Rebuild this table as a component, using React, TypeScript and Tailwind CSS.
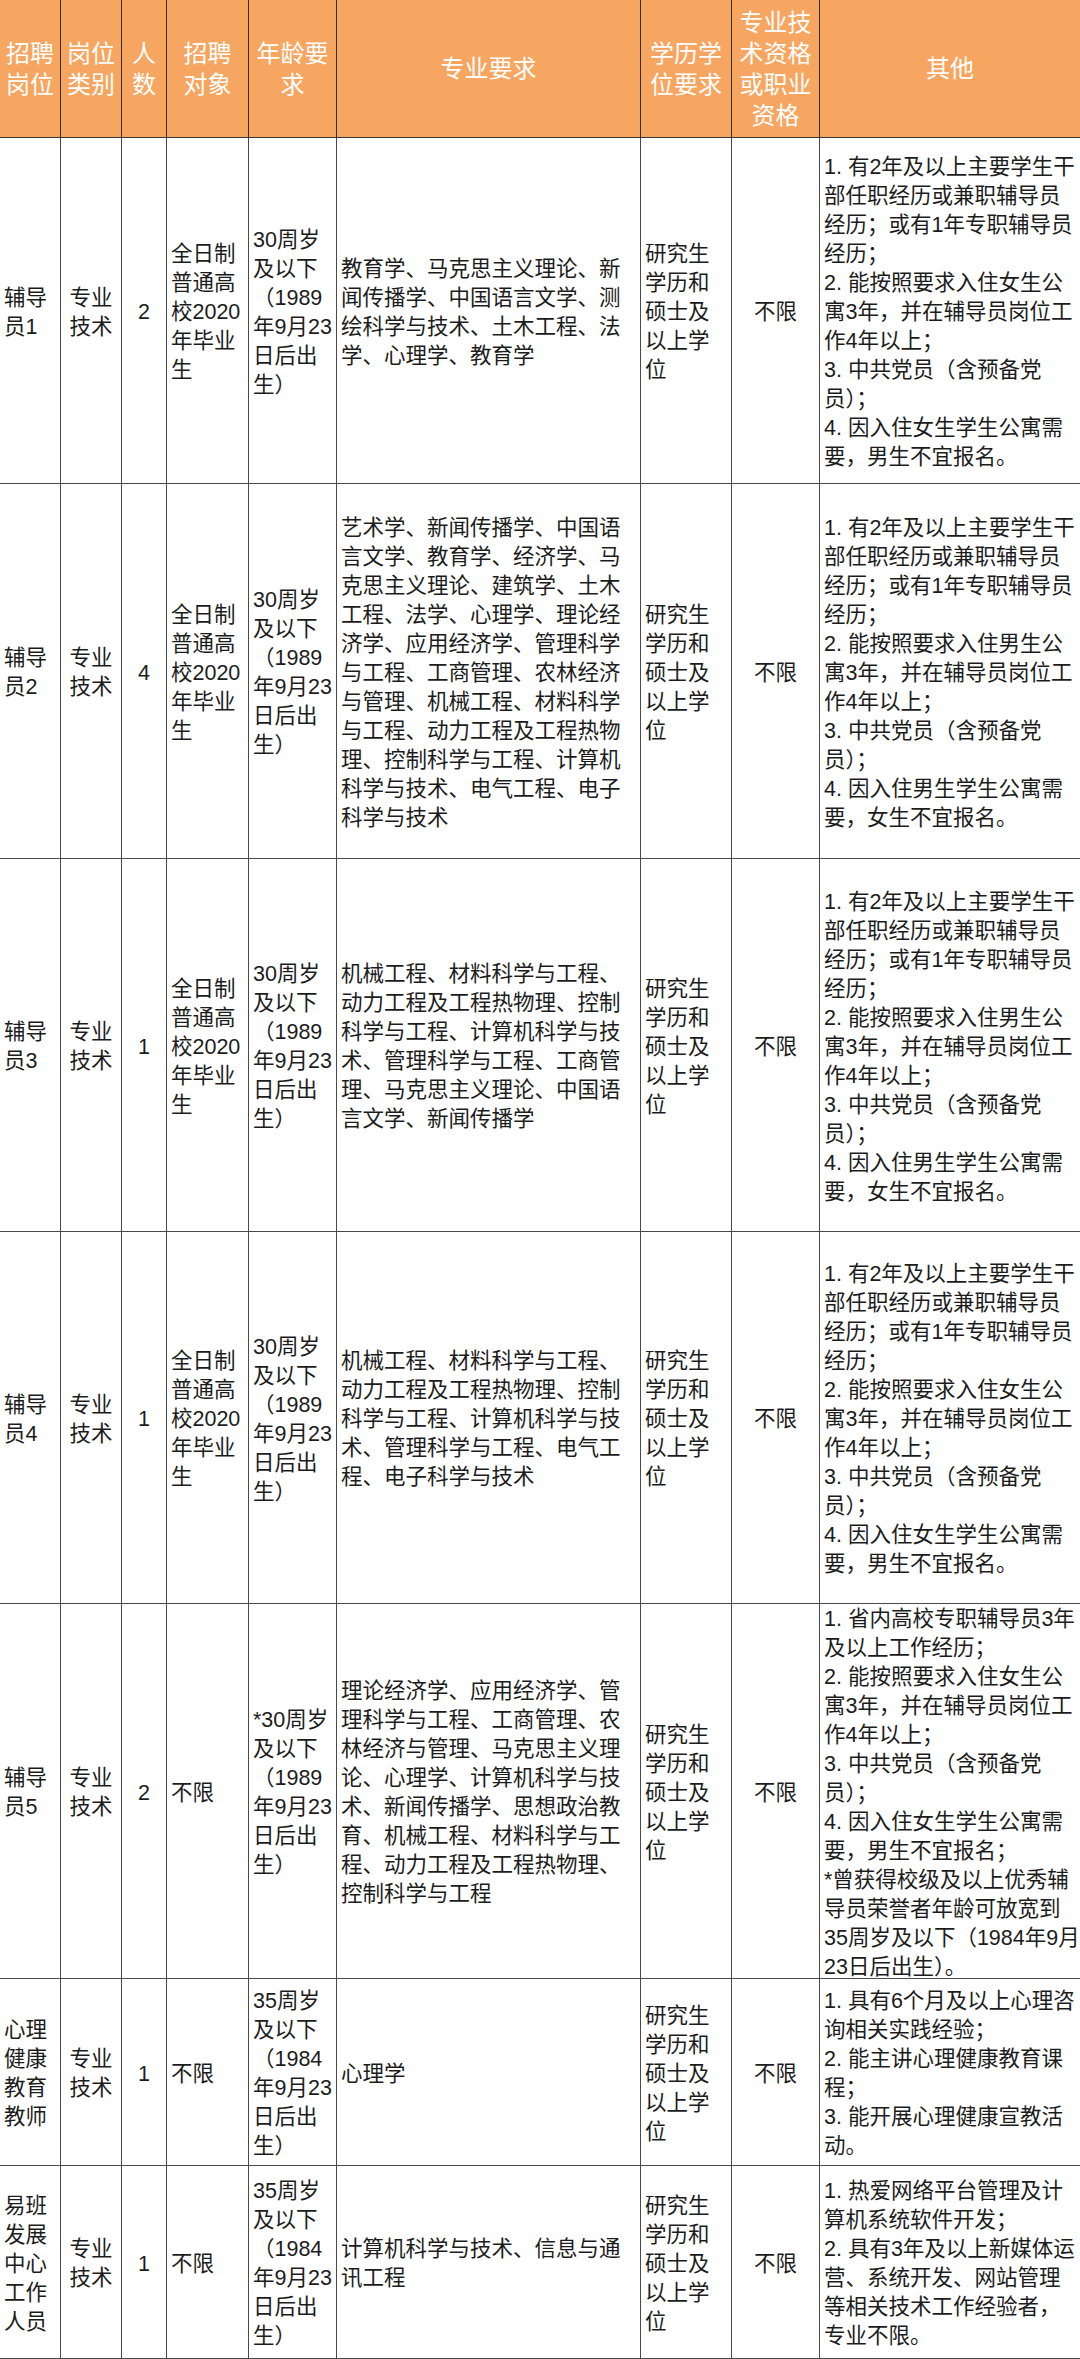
import React from 'react';

// recruitment table: fixed column widths and row heights, text lines broken as in the sheet
type Align = 'left' | 'center';

interface Row {
  h: string;
  cells: string[][];
}

const ALIGN: Align[] = ['left', 'center', 'center', 'left', 'left', 'left', 'left', 'center', 'left'];

const HEADER: string[][] = [
  ['招聘', '岗位'],
  ['岗位', '类别'],
  ['人', '数'],
  ['招聘', '对象'],
  ['年龄要', '求'],
  ['专业要求'],
  ['学历学', '位要求'],
  ['专业技', '术资格', '或职业', '资格'],
  ['其他'],
];

const EDU = ['研究生', '学历和', '硕士及', '以上学', '位'];
const TYPE = ['专业', '技术'];
const AGE30 = ['30周岁', '及以下', '（1989', '年9月23', '日后出', '生）'];
const AGE35 = ['35周岁', '及以下', '（1984', '年9月23', '日后出', '生）'];
const FULLTIME = ['全日制', '普通高', '校2020', '年毕业', '生'];

const otherFemale = [
  '1. 有2年及以上主要学生干',
  '部任职经历或兼职辅导员',
  '经历；或有1年专职辅导员',
  '经历；',
  '2. 能按照要求入住女生公',
  '寓3年，并在辅导员岗位工',
  '作4年以上；',
  '3. 中共党员（含预备党',
  '员）；',
  '4. 因入住女生学生公寓需',
  '要，男生不宜报名。',
];

const otherMale = [
  '1. 有2年及以上主要学生干',
  '部任职经历或兼职辅导员',
  '经历；或有1年专职辅导员',
  '经历；',
  '2. 能按照要求入住男生公',
  '寓3年，并在辅导员岗位工',
  '作4年以上；',
  '3. 中共党员（含预备党',
  '员）；',
  '4. 因入住男生学生公寓需',
  '要，女生不宜报名。',
];

const ROWS: Row[] = [
  {
    h: 'h-[346px]',
    cells: [
      ['辅导', '员1'],
      TYPE,
      ['2'],
      FULLTIME,
      AGE30,
      ['教育学、马克思主义理论、新', '闻传播学、中国语言文学、测', '绘科学与技术、土木工程、法', '学、心理学、教育学'],
      EDU,
      ['不限'],
      otherFemale,
    ],
  },
  {
    h: 'h-[375px]',
    cells: [
      ['辅导', '员2'],
      TYPE,
      ['4'],
      FULLTIME,
      AGE30,
      [
        '艺术学、新闻传播学、中国语',
        '言文学、教育学、经济学、马',
        '克思主义理论、建筑学、土木',
        '工程、法学、心理学、理论经',
        '济学、应用经济学、管理科学',
        '与工程、工商管理、农林经济',
        '与管理、机械工程、材料科学',
        '与工程、动力工程及工程热物',
        '理、控制科学与工程、计算机',
        '科学与技术、电气工程、电子',
        '科学与技术',
      ],
      EDU,
      ['不限'],
      otherMale,
    ],
  },
  {
    h: 'h-[373px]',
    cells: [
      ['辅导', '员3'],
      TYPE,
      ['1'],
      FULLTIME,
      AGE30,
      [
        '机械工程、材料科学与工程、',
        '动力工程及工程热物理、控制',
        '科学与工程、计算机科学与技',
        '术、管理科学与工程、工商管',
        '理、马克思主义理论、中国语',
        '言文学、新闻传播学',
      ],
      EDU,
      ['不限'],
      otherMale,
    ],
  },
  {
    h: 'h-[372px]',
    cells: [
      ['辅导', '员4'],
      TYPE,
      ['1'],
      FULLTIME,
      AGE30,
      [
        '机械工程、材料科学与工程、',
        '动力工程及工程热物理、控制',
        '科学与工程、计算机科学与技',
        '术、管理科学与工程、电气工',
        '程、电子科学与技术',
      ],
      EDU,
      ['不限'],
      otherFemale,
    ],
  },
  {
    h: 'h-[375px]',
    cells: [
      ['辅导', '员5'],
      TYPE,
      ['2'],
      ['不限'],
      ['*30周岁', '及以下', '（1989', '年9月23', '日后出', '生）'],
      [
        '理论经济学、应用经济学、管',
        '理科学与工程、工商管理、农',
        '林经济与管理、马克思主义理',
        '论、心理学、计算机科学与技',
        '术、新闻传播学、思想政治教',
        '育、机械工程、材料科学与工',
        '程、动力工程及工程热物理、',
        '控制科学与工程',
      ],
      EDU,
      ['不限'],
      [
        '1. 省内高校专职辅导员3年',
        '及以上工作经历；',
        '2. 能按照要求入住女生公',
        '寓3年，并在辅导员岗位工',
        '作4年以上；',
        '3. 中共党员（含预备党',
        '员）；',
        '4. 因入住女生学生公寓需',
        '要，男生不宜报名；',
        '*曾获得校级及以上优秀辅',
        '导员荣誉者年龄可放宽到',
        '35周岁及以下（1984年9月',
        '23日后出生）。',
      ],
    ],
  },
  {
    h: 'h-[187px]',
    cells: [
      ['心理', '健康', '教育', '教师'],
      TYPE,
      ['1'],
      ['不限'],
      AGE35,
      ['心理学'],
      EDU,
      ['不限'],
      ['1. 具有6个月及以上心理咨', '询相关实践经验；', '2. 能主讲心理健康教育课', '程；', '3. 能开展心理健康宣教活', '动。'],
    ],
  },
  {
    h: 'h-[193px]',
    cells: [
      ['易班', '发展', '中心', '工作', '人员'],
      TYPE,
      ['1'],
      ['不限'],
      AGE35,
      ['计算机科学与技术、信息与通', '讯工程'],
      EDU,
      ['不限'],
      ['1. 热爱网络平台管理及计', '算机系统软件开发；', '2. 具有3年及以上新媒体运', '营、系统开发、网站管理', '等相关技术工作经验者，', '专业不限。'],
    ],
  },
];

function BodyCell({ lines, align, last }: { lines: string[]; align: Align; last: boolean }) {
  return (
    <div
      className={`flex flex-col justify-center overflow-hidden border-b border-[#4a4a4a] pt-1 ${
        last ? '' : 'border-r'
      } ${align === 'center' ? 'items-center text-center' : 'items-start pl-1 text-left'}`}
    >
      {lines.map((line, i) => (
        <div key={i} className="whitespace-nowrap leading-[29px]">
          {line}
        </div>
      ))}
    </div>
  );
}

export default function App() {
  return (
    <div className="w-[1080px] h-[2359px] overflow-hidden bg-white text-[21.5px] text-[#1c1c1c] font-['Liberation_Sans','Noto_Sans_CJK_SC',sans-serif]">
      <div className="grid h-[138px] grid-cols-[61px_61px_45px_82px_88px_304px_91px_88px_260px] bg-[#f6a660] text-[24px] text-white border-b border-[#3a3a3a]">
        {HEADER.map((lines, i) => (
          <div
            key={i}
            className={`flex flex-col items-center justify-center text-center ${
              i < HEADER.length - 1 ? 'border-r border-[#2f2f2f]' : ''
            }`}
          >
            {lines.map((line, j) => (
              <div key={j} className="whitespace-nowrap leading-[31px]">
                {line}
              </div>
            ))}
          </div>
        ))}
      </div>

      {ROWS.map((row, r) => (
        <div
          key={r}
          className={`grid ${row.h} grid-cols-[61px_61px_45px_82px_88px_304px_91px_88px_260px]`}
        >
          {row.cells.map((lines, c) => (
            <BodyCell key={c} lines={lines} align={ALIGN[c]} last={c === row.cells.length - 1} />
          ))}
        </div>
      ))}
    </div>
  );
}
